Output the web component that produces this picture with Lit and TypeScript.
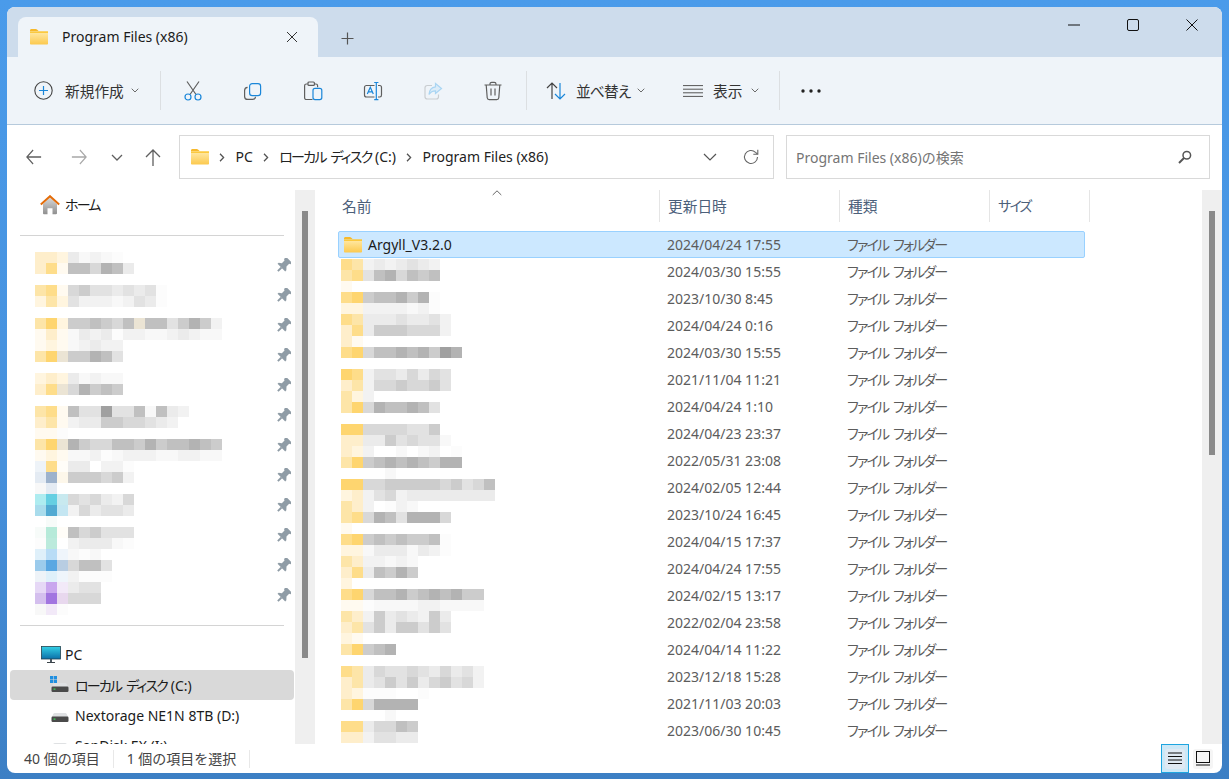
import { LitElement, html, css, svg } from "lit";
import { customElement, property } from "lit/decorators.js";

// palette for the blurred (mosaic) cells
const PALETTE: Record<string, string> = {
  A: "#fed56f", B: "#fedd8a", C: "#fde5a8", D: "#feeecb", E: "#fff5df", F: "#fffaf0",
  "0": "#a0a0a0", "1": "#b3b3b3", "2": "#c0c0c0", "3": "#cccccc", "4": "#d8d8d8",
  "5": "#e2e2e2", "6": "#ebebeb", "7": "#f2f2f2", "8": "#f8f8f8", "9": "#fcfcfc",
  t: "#ebe4d4", u: "#fffdf8", v: "#fdf7ea",
  a: "#eef3f8", b: "#c9d6e3", c: "#e4ebf3", d: "#9db2cc",
  e: "#aeecf0", f: "#66cfe2", g: "#c8e9ef", h: "#a9dcec", i: "#52aad2", j: "#c4e6f2",
  k: "#f7fbf9", l: "#b6ead9", m: "#bbeadc",
  n: "#dff0fa", o: "#b8dcf6", p: "#eff5fb", q: "#9bcbec", r: "#5aa7e2", s: "#b8cde2",
  w: "#e6d8f6", x: "#c9a6ee", y: "#f2e9f8", z: "#d4bfee", G: "#a275e0", H: "#e8d8ee",
};

const NAV_MOSAIC = [
  "DDE68789", "DBF224126", "",
  "CBF435565659", "ECE577787569", "",
  "CAE332342t2253137", "FDF86769778876788", "FEF87677", "CAt33125", "",
  "EDE68788", "DBt41323", "",
  "CBF25505528267", "DCF7663344567", "FF9", "CAt13442231322123", "FEF88798777887788",
  "aBu66.779", "cdv333437", "8c", "efg454674", "hij746556", ".k",
  "klu243555", "9m.766689", "nop898", "qrs4225", "anp7999", "wxy655", "zGH444", "8y9",
];

const FILE_MOSAIC = [
  "BC7676567", "CB5214232", "F", "BA3221319", "EE7777879", "BC66656657", "DB63334447", "DF",
  "BA42212130 1", "", "AB75564645", "DC74434435", "CE7", "CA4122125", "",
  "AA4444553", "DD66354558", "DE7..8.87.9", "CA32121231 1", "....8",
  "AA44333334354 2", "ED75476666666 6", "CD7.978", "CB41251114", "F",
  "BA32323329", "EE86668679", "CD77878", "DB62313", "E",
  "BA4221321213 3", "FF9888877888 8", "CD73656736", "DC53633535", "EF", "CA321", "",
  "BC6455456465 7", "DC6535364354 7", "DE999..9", "CA41111", "....8", "BB64423", "DD75566",
].map((r) => r.replace(/ /g, ""));

const FILES = [
  "2024/04/24 17:55", "2024/03/30 15:55", "2023/10/30 8:45", "2024/04/24 0:16", "2024/03/30 15:55",
  "2021/11/04 11:21", "2024/04/24 1:10", "2024/04/23 23:37", "2022/05/31 23:08", "2024/02/05 12:44",
  "2023/10/24 16:45", "2024/04/15 17:37", "2024/04/24 17:55", "2024/02/15 13:17", "2022/02/04 23:58",
  "2024/04/14 11:22", "2023/12/18 15:28", "2021/11/03 20:03", "2023/06/30 10:45",
];

const folderIcon = (w = 18) => html`<svg class="ico" width=${w} height=${(w * 16) / 18} viewBox="0 0 18 16">
  <defs><linearGradient id="fg" x1="0" y1="0" x2="0" y2="1"><stop offset="0" stop-color="#ffe9a6"/><stop offset="1" stop-color="#fcc94e"/></linearGradient></defs>
  <path d="M0 1.5C0 .7.6 0 1.4 0h4.4c.5 0 .9.2 1.2.5L8.6 2H0z" fill="#f7b92c"/>
  <path d="M0 3h18v11.4c0 .6-.5 1.1-1.1 1.1H1.1C.5 15.5 0 15 0 14.4z" fill="url(#fg)"/>
  <path d="M0 2.2h18V4H0z" fill="#fbc93f"/>
</svg>`;

const chev = html`<svg class="ico" width="8" height="5" viewBox="0 0 8 5"><path d="M.7.7 4 4 7.3.7" fill="none" stroke="#6b6b6b" stroke-width="1"/></svg>`;
const crumb = html`<svg class="ico crumb" width="6" height="9" viewBox="0 0 6 9"><path d="M1 .8 4.6 4.5 1 8.2" fill="none" stroke="#555" stroke-width="1.3"/></svg>`;

const BLUE = "#1a86d9";
const GREY = "#5f5f5f";

const tool = (body: unknown) => html`<svg class="ico" width="20" height="20" viewBox="0 0 20 20" fill="none" stroke-width="1.2">${body}</svg>`;

const TOOL_ICONS = [
  tool(svg`<path d="M4 .5 13 13.5M16 .5 7 13.5" stroke=${GREY}/><circle cx="5" cy="16" r="3" stroke=${BLUE}/><circle cx="15" cy="16" r="3" stroke=${BLUE}/>`),
  tool(svg`<rect x="6.6" y="2.6" width="11" height="12" rx="2.6" stroke=${BLUE}/><path d="M4.6 6.4C2.6 6.6 1.6 7.8 1.6 9.4v6c0 1.9 1.2 3 3 3h5c1.6 0 2.8-1 3-2.6" stroke=${GREY}/>`),
  tool(svg`<path d="M9.500 18.500H3.400c-1 0-1.800-.8-1.800-1.800V4.800c0-1 .8-1.800 1.800-1.800h1.400M11.500 3h1.300c1 0 1.800.8 1.800 1.800v1.400" stroke=${GREY}/><rect x="5" y="1" width="6.400" height="3.400" rx="1" stroke=${GREY}/><rect x="10" y="7.400" width="8.800" height="11.200" rx="2" stroke=${BLUE}/>`),
  tool(svg`<path d="M11.500 4.500H3.500c-1.200 0-2 .8-2 2v7.500c0 1.200.8 2 2 2h8M15 4.500h1.800c1 0 1.700.8 1.700 2v7.500c0 1.200-.7 2-1.700 2H15" stroke=${GREY}/><path d="M4.300 13 7.300 6.300 10.300 13M5.300 10.800h4" stroke=${BLUE}/><path d="M11.200 1.500h4.200M11.200 18.700h4.200M13.300 1.500v17.200" stroke=${BLUE}/>`),
  tool(svg`<path d="M9 4.500H4.300C2.800 4.500 2 5.400 2 6.800v9c0 1.400.8 2.200 2.300 2.200h9c1.400 0 2.200-.8 2.200-2.200v-2.300" stroke="#c9cdd1"/><path d="M12.500 2.500 18.500 7.500 12.500 12.500V9.800C9.500 9.800 7.500 11 6 13.500c.3-4.300 2.800-7.300 6.500-7.700z" stroke="#a9d5f3" fill="#dcecf8"/>`),
  tool(svg`<path d="M1.500 4h17M7 3.800V3c0-1 .8-1.600 1.700-1.600h2.600C12.200 1.400 13 2 13 3v.8M3.200 4l1 12.700c.1 1.100.9 1.900 2 1.900h7.600c1.100 0 1.900-.8 2-1.900L16.800 4M8 7.500v7M12 7.500v7" stroke=${GREY}/>`),
];

const homeIcon = html`<svg class="ico" width="20" height="20" viewBox="0 0 20 20">
  <defs><linearGradient id="hg" x1="0" y1="0" x2="0" y2="1"><stop offset="0" stop-color="#d8d8d8"/><stop offset="1" stop-color="#8f8f8f"/></linearGradient></defs>
  <path d="M3 9 10 2.500 17 9v9.300c0 .5-.4.9-.9.9H12.500v-6h-5v6H3.900c-.5 0-.9-.4-.9-.9z" fill="url(#hg)"/>
  <path d="M.8 9.500 10 1.200l9.200 8.300" fill="none" stroke="#e36c09" stroke-width="2"/>
</svg>`;

const pcIcon = html`<svg class="ico" width="20" height="18" viewBox="0 0 20 18">
  <defs><linearGradient id="pg" x1="0" y1="0" x2="0" y2="1"><stop offset="0" stop-color="#33d0e6"/><stop offset="1" stop-color="#0b6fa8"/></linearGradient></defs>
  <rect x=".5" y=".5" width="19" height="12.500" fill="url(#pg)" stroke="#24424f" stroke-width=".8"/>
  <path d="M9 13h2v3H9z" fill="#4d5860"/><path d="M6 16h8v1H6z" fill="#3b444a"/>
</svg>`;

const driveIcon = (win: boolean) => html`<svg class="ico" width="20" height="20" viewBox="0 0 20 20">
  <path d="M3 9.500c.4-1 1-1.500 2-1.500h10c1 0 1.600.5 2 1.500l1 2.500H2z" fill="#dfe1e3"/>
  <rect x="1.500" y="11.500" width="17" height="5.500" rx="1.200" fill="#4a4a4a"/>
  <rect x="3.500" y="13.500" width="2" height="1.200" fill="#3ddc5a"/>
  ${win ? svg`<path d="M0 1h3.200v3.200H0zM3.800 1H7v3.200H3.800zM0 4.800h3.200V8H0zM3.800 4.800H7V8H3.800z" fill="#1f8fe0"/>` : ""}
</svg>`;

const pinIcon = html`<svg class="ico" width="15" height="15" viewBox="0 0 16 16" fill="#8f9ca6"><g transform="rotate(45 8 8)">
  <path d="M3.500 -.5h9v2.200l-1.500.8v4l2.800 3v1.700H2.200v-1.700L5 7.500v-4l-1.500-.8z"/><path d="M7 11h2v5.500H7z"/></g></svg>`;

@customElement("blur-mosaic")
class BlurMosaic extends LitElement {
  static styles = css`
    :host { display: block; position: absolute; pointer-events: none; }
    .r { display: flex; height: 11px; }
    .c { width: 11px; height: 11px; }
  `;

  @property({ type: Array }) rows: string[] = [];

  render() {
    return this.rows.map((row) => html`<div class="r">
      ${[...row].map((ch) => html`<div class="c" style="background:${PALETTE[ch] || "transparent"}"></div>`)}
    </div>`);
  }
}

@customElement("app-root")
export class AppRoot extends LitElement {
  static styles = css`
    :host {
      display: block;
      width: 1229px;
      height: 779px;
      overflow: hidden;
      font-family: "Noto Sans", "Noto Sans CJK JP", sans-serif;
      font-size: 14px;
      color: #1b1b1b;
    }
    * { box-sizing: border-box; }
    .ico { display: block; flex: none; }
    /* CJK runs are slightly larger than latin, kana is set tight */
    .j { font-size: 14.7px; font-feature-settings: "palt" 1; }
    .k { font-size: 14px; font-feature-settings: "palt" 1; letter-spacing: -1.8px; word-spacing: 3px; }
    .m { letter-spacing: -.8px; }
    .desk {
      height: 100%;
      padding: 7px 7px 6px 7px;
      background: linear-gradient(180deg, #4a9bea 0%, #4690dc 60%, #3c7fc4 100%);
    }
    .win {
      height: 100%;
      display: flex;
      flex-direction: column;
      background: #fff;
      border-radius: 8px;
      overflow: hidden;
    }

    /* title bar */
    .title { height: 50px; flex: none; display: flex; align-items: flex-end; background: #cddcec; padding-left: 11px; }
    .tab {
      width: 300px; height: 40px; display: flex; align-items: center; padding: 0 0 0 12px;
      background: #eff4f9; border-radius: 8px 8px 0 0;
    }
    .tab-name { margin-left: 14px; flex: 1; font-size: 14px; line-height: 20px; padding-bottom: 1px; }
    .tab-close { margin-right: 20px; }
    .plus { margin: 0 0 12px 23px; }
    .winctl { margin-left: auto; align-self: flex-start; display: flex; align-items: center; height: 36px; }
    .winctl div { width: 58.500px; display: flex; justify-content: center; }
    .winctl div:last-child { width: 60px; }

    /* command bar */
    .cmd {
      height: 68px; flex: none; display: flex; align-items: center; padding-left: 27px;
      background: #eff4f9; border-bottom: 1px solid #b6cadc;
    }
    .cmd-txt { color: #333; line-height: 20px; }
    .new { display: flex; align-items: center; width: 126px; }
    .new .cmd-txt { margin: 0 7px 0 12px; }
    .sep { width: 1px; height: 39px; background: #dcdfe2; flex: none; }
    .tool { width: 60px; display: flex; justify-content: center; flex: none; }
    .tools { display: flex; margin-left: 2px; margin-right: 3px; }
    .sort { display: flex; align-items: center; width: 141px; padding-left: 19px; }
    .sort .cmd-txt { margin: 0 7px 0 10px; }
    .view { display: flex; align-items: center; width: 111px; padding-left: 15px; }
    .view .cmd-txt { margin: 0 9px 0 10px; }
    .dots { margin-left: 21px; }

    /* address row */
    .addr { height: 65px; flex: none; display: flex; align-items: flex-start; padding-top: 10px; }
    .nav-btns { width: 172px; height: 44px; display: flex; align-items: center; padding-left: 19px; }
    .nav-btns svg:nth-child(2) { margin-left: 29px; }
    .nav-btns svg:nth-child(3) { margin-left: 24px; }
    .nav-btns svg:nth-child(4) { margin-left: 22px; }
    .box { height: 44px; border: 1px solid #d9d9d9; display: flex; align-items: center; background: #fff; }
    .path { width: 595px; padding-left: 11px; }
    .path > span { margin-right: 10px; line-height: 20px; color: #222; }
    .path .crumb { margin-right: 10.5px; }
    .path .folder { margin-right: 10px; }
    .path .end { margin-left: auto; display: flex; align-items: center; gap: 26px; padding-right: 14px; }
    .search { width: 424px; margin-left: 12px; padding: 0 17px 0 9px; justify-content: space-between; color: #757575; font-size: 14px; }

    /* body */
    .body { flex: 1; min-height: 0; display: flex; overflow: hidden; }
    .nav { width: 288px; flex: none; position: relative; overflow: hidden; }
    .item { height: 30px; display: flex; align-items: center; margin-left: 3px; width: 284px; border-radius: 4px; line-height: 20px; color: #1b1b1b; }
    .item.top { padding-left: 30px; }
    .item.top > span { margin-left: 5px; }
    .item.pc { padding-left: 31px; }
    .item.pc > span { margin-left: 4px; }
    .item.sub { padding-left: 40px; }
    .item.sub > span { margin-left: 5px; padding-top: 1px; }
    .item.sel { background: #d9d9d9; }
    .rule { height: 1px; background: #d4d4d4; margin: 15px 10px 14px 13px; width: 264px; }
    .pins { position: relative; }
    .pin-row { height: 30px; display: flex; align-items: center; justify-content: flex-end; padding-right: 4px; }
    .track { width: 20px; flex: none; background: #efefef; display: flex; justify-content: center; }
    .thumb { width: 6px; margin-top: 21px; background: #8a8a8a; }
    .track.a .thumb { height: 447px; }
    .track.b .thumb { height: 244px; }

    .main { flex: 1; min-width: 0; padding-left: 22px; position: relative; }
    .caret { position: absolute; left: 177px; top: 0; }
    .cols { display: grid; grid-template-columns: 323px 180px 150px 100px; height: 32px; }
    .cols div { padding-left: 8px; border-right: 1px solid #e5e5e5; line-height: 32px; color: #4c607a; }
    .cols div:first-child { padding-left: 5px; }
    .rows { margin-top: 9px; position: relative; width: 747px; margin-left: 1px; }
    .rows blur-mosaic { left: 3px; top: 28px; }
    .row { height: 27px; display: grid; grid-template-columns: 328px 180px 1fr; align-items: center; border: 1px solid transparent; color: #5c5c5c; line-height: 24px; }
    .row.sel { background: #cce8ff; border: 1px solid #99d1ff; border-radius: 2px; }
    .row .nm { display: flex; align-items: center; padding-left: 5px; gap: 6px; color: #1b1b1b; }

    /* status bar */
    .status { height: 29px; flex: none; display: flex; align-items: center; padding-left: 17px; font-size: 14px; color: #444; }
    .status .s { padding-right: 13px; border-right: 1px solid #e8e8e8; line-height: 18px; margin-right: 13px; }
    .views { margin-left: auto; display: flex; align-items: center; height: 100%; margin-right: 5px; }
    .vbtn { width: 28px; height: 100%; display: flex; align-items: center; justify-content: center; }
    .vbtn.on { background: #cce8f7; border: 1px solid #1ea5e0; }
    .vbtn.on i { display: flex; width: 20px; height: 20px; background: #dfe9f3; border-radius: 3px; align-items: center; justify-content: center; }
    .vbtn.off i { display: flex; width: 20px; height: 20px; background: #f5f5f5; border-radius: 3px; align-items: center; justify-content: center; }
  `;

  render() {
    return html`<div class="desk"><div class="win">
      ${this.renderTitle()}
      ${this.renderCmd()}
      ${this.renderAddr()}
      <div class="body">
        ${this.renderNav()}
        <div class="track a"><div class="thumb"></div></div>
        ${this.renderMain()}
        <div class="track b"><div class="thumb"></div></div>
      </div>
      ${this.renderStatus()}
    </div></div>`;
  }

  renderTitle() {
    return html`<div class="title">
      <div class="tab">
        ${folderIcon(18)}
        <div class="tab-name">Program Files (x86)</div>
        <svg class="ico tab-close" width="12" height="12" viewBox="0 0 12 12"><path d="M1 1l10 10M11 1 1 11" stroke="#333" stroke-width="1"/></svg>
      </div>
      <svg class="ico plus" width="13" height="13" viewBox="0 0 13 13"><path d="M6.500.5v12M.5 6.500h12" stroke="#555" stroke-width="1.200"/></svg>
      <div class="winctl">
        <div><svg class="ico" width="12" height="2" viewBox="0 0 12 2"><path d="M0 1h12" stroke="#111" stroke-width="1"/></svg></div>
        <div><svg class="ico" width="12" height="12" viewBox="0 0 12 12"><rect x=".5" y=".5" width="11" height="11" rx="1.500" fill="none" stroke="#111"/></svg></div>
        <div><svg class="ico" width="12" height="12" viewBox="0 0 12 12"><path d="M.5.5l11 11M11.500.5l-11 11" stroke="#111" stroke-width="1"/></svg></div>
      </div>
    </div>`;
  }

  renderCmd() {
    return html`<div class="cmd">
      <div class="new">
        <svg class="ico" width="19" height="19" viewBox="0 0 19 19" fill="none"><circle cx="9.500" cy="9.500" r="8.700" stroke="#444" stroke-width="1.100"/><path d="M9.500 5v9M5 9.500h9" stroke=${BLUE} stroke-width="1.200"/></svg>
        <span class="cmd-txt j">新規作成</span>${chev}
      </div>
      <div class="sep"></div>
      <div class="tools">${TOOL_ICONS.map((i) => html`<div class="tool">${i}</div>`)}</div>
      <div class="sep"></div>
      <div class="sort">
        <svg class="ico" width="20" height="18" viewBox="0 0 20 18" fill="none" stroke-width="1.200"><path d="M6 17V1M1 6l5-5 5 5" stroke="#444"/><path d="M14 1v16M9 12l5 5 5-5" stroke=${BLUE}/></svg>
        <span class="cmd-txt j m">並べ替え</span>${chev}
      </div>
      <div class="view">
        <svg class="ico" width="20" height="12" viewBox="0 0 20 12" fill="none"><path d="M0 .6h20M0 4.200h20M0 7.800h20M0 11.400h20" stroke="#555" stroke-width="1"/></svg>
        <span class="cmd-txt j">表示</span>${chev}
      </div>
      <div class="sep"></div>
      <svg class="ico dots" width="20" height="4" viewBox="0 0 20 4" fill="#222"><circle cx="2" cy="2" r="1.700"/><circle cx="10" cy="2" r="1.700"/><circle cx="18" cy="2" r="1.700"/></svg>
    </div>`;
  }

  renderAddr() {
    const arrow = (d: string, c: string) => html`<svg class="ico" width="16" height="16" viewBox="0 0 18 16" preserveAspectRatio="none" fill="none"><path d=${d} stroke=${c} stroke-width="1.300"/></svg>`;
    return html`<div class="addr">
      <div class="nav-btns">
        ${arrow("M17 8H1M8 1 1 8l7 7", "#5f5f5f")}
        ${arrow("M1 8h16M10 1l7 7-7 7", "#a8a8a8")}
        <svg class="ico" width="12" height="7" viewBox="0 0 12 7" fill="none"><path d="M1 1l5 5 5-5" stroke="#5f5f5f" stroke-width="1.300"/></svg>
        <svg class="ico" width="16" height="17" viewBox="0 0 16 17" fill="none"><path d="M8 17V1M1 8l7-7 7 7" stroke="#5f5f5f" stroke-width="1.300"/></svg>
      </div>
      <div class="box path">
        <div class="folder">${folderIcon(18)}</div>
        ${crumb}<span>PC</span>${crumb}<span><span class="k">ローカル ディスク</span> (C:)</span>${crumb}<span>Program Files (x86)</span>
        <div class="end">
          <svg class="ico" width="14" height="8" viewBox="0 0 14 8" fill="none"><path d="M1 1l6 6 6-6" stroke="#555" stroke-width="1.200"/></svg>
          <svg class="ico" width="16" height="16" viewBox="0 0 16 16" fill="none"><path d="M14.500 8a6.500 6.500 0 1 1-2-4.700L14.500 5" stroke="#666" stroke-width="1.100"/><path d="M14.800 .8v4.500h-4.500" stroke="#666" stroke-width="1.100"/></svg>
        </div>
      </div>
      <div class="box search">
        <span>Program Files (x86)の検索</span>
        <svg class="ico" width="14" height="14" viewBox="0 0 14 14" fill="none"><circle cx="8.800" cy="5.200" r="3.800" stroke="#555" stroke-width="1.500"/><path d="M6 8 1 13" stroke="#555" stroke-width="2"/></svg>
      </div>
    </div>`;
  }

  renderNav() {
    return html`<div class="nav">
      <div class="item top">${homeIcon}<span class="k">ホーム</span></div>
      <div class="rule"></div>
      <div class="pins">
        <blur-mosaic style="left:28px;top:2px" .rows=${NAV_MOSAIC}></blur-mosaic>
        ${Array.from({ length: 12 }, () => html`<div class="pin-row">${pinIcon}</div>`)}
      </div>
      <div class="rule"></div>
      <div class="item pc">${pcIcon}<span>PC</span></div>
      <div class="item sub sel">${driveIcon(true)}<span><span class="k">ローカル ディスク</span> (C:)</span></div>
      <div class="item sub">${driveIcon(false)}<span>Nextorage NE1N 8TB (D:)</span></div>
      <div class="item sub">${driveIcon(false)}<span>SanDisk EX (I:)</span></div>
    </div>`;
  }

  renderMain() {
    return html`<div class="main">
      <svg class="ico caret" width="10" height="6" viewBox="0 0 10 6" fill="none"><path d="M.7 5 5 .8 9.300 5" stroke="#666" stroke-width="1"/></svg>
      <div class="cols"><div class="j">名前</div><div class="j">更新日時</div><div class="j">種類</div><div class="k">サイズ</div></div>
      <div class="rows">
        <blur-mosaic .rows=${FILE_MOSAIC}></blur-mosaic>
        ${FILES.map((d, i) => html`<div class="row ${i === 0 ? "sel" : ""}">
          <div class="nm">${i === 0 ? html`${folderIcon(18)}<span>Argyll_V3.2.0</span>` : ""}</div>
          <div>${d}</div><div class="k">ファイル フォルダー</div>
        </div>`)}
      </div>
    </div>`;
  }

  renderStatus() {
    return html`<div class="status">
      <div class="s">40 個の項目</div>
      <div class="s">1 個の項目を選択</div>
      <div class="views">
        <div class="vbtn on"><i><svg class="ico" width="14" height="13" viewBox="0 0 14 13"><path d="M0 1h14M0 4.500h14M0 8h14M0 11.500h14" stroke="#111" stroke-width="1"/></svg></i></div>
        <div class="vbtn off"><i><svg class="ico" width="14" height="15" viewBox="0 0 14 15" fill="none"><rect x=".5" y=".5" width="13" height="11" stroke="#111"/><path d="M0 14h14" stroke="#111"/></svg></i></div>
      </div>
    </div>`;
  }
}
